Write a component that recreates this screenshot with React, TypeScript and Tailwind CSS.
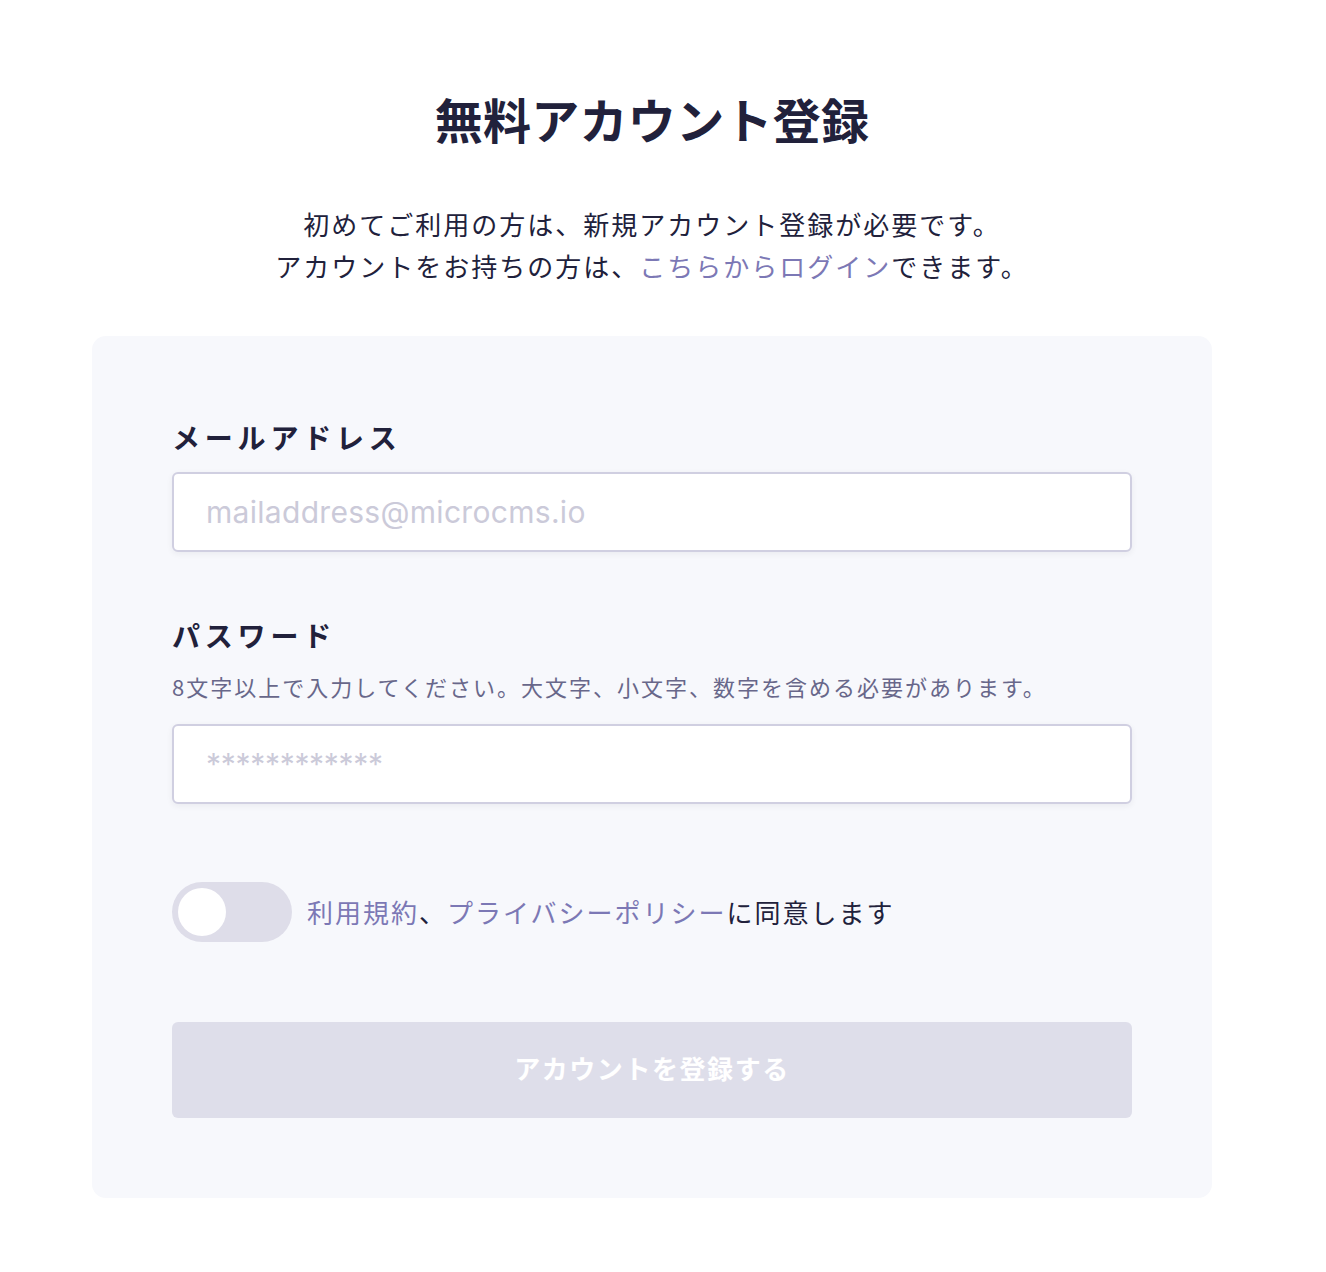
import React, { useState } from "react";

const jp = "font-['Noto_Sans_CJK_JP','Noto_Sans',sans-serif]";

function Field({
  label,
  hint,
  placeholder,
  type = "text",
}: {
  label: string;
  hint?: string;
  placeholder: string;
  type?: string;
}) {
  return (
    <div className="flex flex-col">
      <label className="text-[28px] leading-[42px] font-bold tracking-[4.8px] text-[#21213b]">
        {label}
      </label>
      {hint && (
        <p className="mt-[14px] text-[22px] leading-[32px] tracking-[2px] text-[#68678a]">
          {hint}
        </p>
      )}
      <input
        type={type}
        placeholder={placeholder}
        className={
          "h-[80px] w-full rounded-[6px] border-2 border-[#d0cfe1] bg-white px-[32px] text-[30px] text-[#21213b] shadow-[0_2px_6px_rgba(33,33,59,0.06)] outline-none font-['Inter',sans-serif] placeholder:text-[#cbcad9] " +
          (type === "password"
            ? "mt-[22px] placeholder:tracking-[-0.3px]"
            : "mt-[14px] placeholder:tracking-[0.3px]")
        }
      />
    </div>
  );
}

export default function App() {
  const [agreed, setAgreed] = useState(false);

  return (
    <div className={"min-h-[1272px] w-full bg-white text-[#21213b] " + jp}>
      <div className="ml-[92px] w-[1120px] pt-[82px]">
        {/* Heading */}
        <h1 className="text-center text-[48px] leading-[72px] font-bold tracking-[0.3px] text-[#21213b]">
          無料アカウント登録
        </h1>
        <p className="mt-[49px] text-center text-[26px] leading-[42px] tracking-[2px] text-[#21213b]">
          初めてご利用の方は、新規アカウント登録が必要です。
          <br />
          アカウントをお持ちの方は、
          <a href="#" className="text-[#7c78b5]">
            こちらからログイン
          </a>
          できます。
        </p>

        {/* Form card */}
        <div className="mt-[49px] rounded-[14px] bg-[#f7f8fc] px-[80px] pt-[80px] pb-[80px]">
          <Field label="メールアドレス" placeholder="mailaddress@microcms.io" />
          <div className="mt-[62px]">
            <Field
              label="パスワード"
              hint="8文字以上で入力してください。大文字、小文字、数字を含める必要があります。"
              placeholder="************"
              type="password"
            />
          </div>

          {/* Terms toggle */}
          <div className="mt-[78px] flex items-center gap-[15px]">
            <button
              type="button"
              onClick={() => setAgreed(!agreed)}
              className={
                "flex h-[60px] w-[120px] shrink-0 items-center rounded-full px-[6px] " +
                (agreed ? "justify-end bg-[#7c78b5]" : "justify-start bg-[#dedde9]")
              }
            >
              <span className="block h-[48px] w-[48px] rounded-full bg-white" />
            </button>
            <span className="text-[26px] leading-[42px] tracking-[2px] text-[#21213b]">
              <a href="#" className="text-[#7c78b5]">
                利用規約
              </a>
              、
              <a href="#" className="text-[#7c78b5]">
                プライバシーポリシー
              </a>
              に同意します
            </span>
          </div>

          {/* Submit */}
          <button
            type="button"
            disabled={!agreed}
            className={
              "mt-[80px] flex h-[96px] w-full items-center justify-center rounded-[6px] pb-[5px] text-[26px] font-bold tracking-[0.06em] text-white " +
              (agreed ? "bg-[#7c78b5]" : "bg-[#dedeea]")
            }
          >
            アカウントを登録する
          </button>
        </div>
      </div>
    </div>
  );
}
